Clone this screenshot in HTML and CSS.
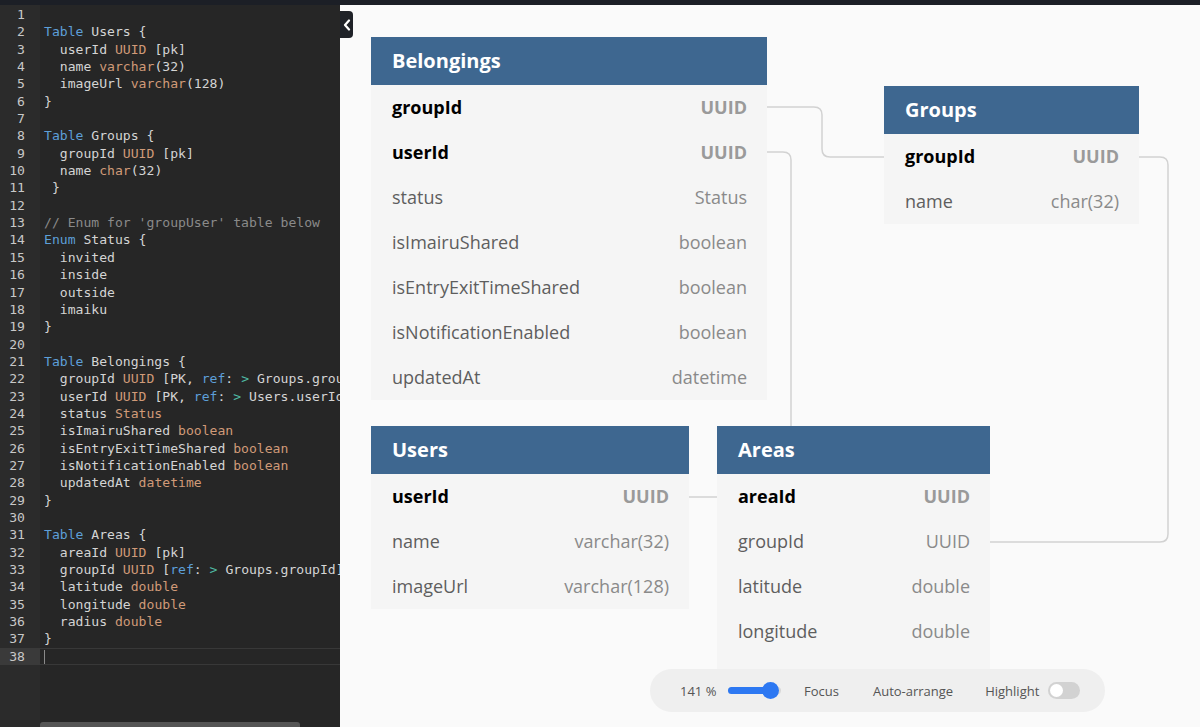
FILE: index.html
```html
<!DOCTYPE html>
<html>
<head>
<meta charset="utf-8">
<link rel="stylesheet" href="styles.css">
</head>
<body>
<div class="topbar"></div>
<div class="main">
  <div class="editor">
    <div class="gutter">
      <div>1</div><div>2</div><div>3</div><div>4</div><div>5</div><div>6</div><div>7</div><div>8</div><div>9</div><div>10</div>
      <div>11</div><div>12</div><div>13</div><div>14</div><div>15</div><div>16</div><div>17</div><div>18</div><div>19</div><div>20</div>
      <div>21</div><div>22</div><div>23</div><div>24</div><div>25</div><div>26</div><div>27</div><div>28</div><div>29</div><div>30</div>
      <div>31</div><div>32</div><div>33</div><div>34</div><div>35</div><div>36</div><div>37</div><div class="active">38</div>
    </div>
    <div class="code">
      <div class="ln"> </div>
      <div class="ln"><span class="kw">Table</span> Users {</div>
      <div class="ln">  userId <span class="ty">UUID</span> [pk]</div>
      <div class="ln">  name <span class="ty">varchar</span>(32)</div>
      <div class="ln">  imageUrl <span class="ty">varchar</span>(128)</div>
      <div class="ln">}</div>
      <div class="ln"> </div>
      <div class="ln"><span class="kw">Table</span> Groups {</div>
      <div class="ln">  groupId <span class="ty">UUID</span> [pk]</div>
      <div class="ln">  name <span class="ty">char</span>(32)</div>
      <div class="ln"> }</div>
      <div class="ln"> </div>
      <div class="ln"><span class="cm">// Enum for 'groupUser' table below</span></div>
      <div class="ln"><span class="kw">Enum</span> Status {</div>
      <div class="ln">  invited</div>
      <div class="ln">  inside</div>
      <div class="ln">  outside</div>
      <div class="ln">  imaiku</div>
      <div class="ln">}</div>
      <div class="ln"> </div>
      <div class="ln"><span class="kw">Table</span> Belongings {</div>
      <div class="ln">  groupId <span class="ty">UUID</span> [PK, <span class="kw">ref</span>: <span class="op">&gt;</span> Groups.groupId]</div>
      <div class="ln">  userId <span class="ty">UUID</span> [PK, <span class="kw">ref</span>: <span class="op">&gt;</span> Users.userId]</div>
      <div class="ln">  status <span class="ty">Status</span></div>
      <div class="ln">  isImairuShared <span class="ty">boolean</span></div>
      <div class="ln">  isEntryExitTimeShared <span class="ty">boolean</span></div>
      <div class="ln">  isNotificationEnabled <span class="ty">boolean</span></div>
      <div class="ln">  updatedAt <span class="ty">datetime</span></div>
      <div class="ln">}</div>
      <div class="ln"> </div>
      <div class="ln"><span class="kw">Table</span> Areas {</div>
      <div class="ln">  areaId <span class="ty">UUID</span> [pk]</div>
      <div class="ln">  groupId <span class="ty">UUID</span> [<span class="kw">ref</span>: <span class="op">&gt;</span> Groups.groupId]</div>
      <div class="ln">  latitude <span class="ty">double</span></div>
      <div class="ln">  longitude <span class="ty">double</span></div>
      <div class="ln">  radius <span class="ty">double</span></div>
      <div class="ln">}</div>
      <div class="ln active"> </div>
    </div>
    <div class="hscroll"></div>
  </div>

  <div class="canvas">
    <button class="collapse" aria-label="Collapse editor">
      <svg width="8" height="12" viewBox="0 0 8 12"><path d="M6 1.5 L2 6 L6 10.5" fill="none" stroke="#fff" stroke-width="2.2" stroke-linecap="round" stroke-linejoin="round"/></svg>
    </button>

    <svg class="links" width="860" height="722" viewBox="0 0 860 722">
      <path d="M427 102 H474 Q482 102 482 110 V144 Q482 152 490 152 H544"/>
      <path d="M427 147 H443 Q451 147 451 155 V484 Q451 492 443 492 H349"/>
      <path d="M799 152 H820 Q828 152 828 160 V529 Q828 537 820 537 H650"/>
    </svg>

    <div class="tbl t-belongings">
      <div class="th">Belongings</div>
      <div class="row pk"><span class="n">groupId</span><span class="t">UUID</span></div>
      <div class="row pk"><span class="n">userId</span><span class="t">UUID</span></div>
      <div class="row"><span class="n">status</span><span class="t">Status</span></div>
      <div class="row"><span class="n">isImairuShared</span><span class="t">boolean</span></div>
      <div class="row"><span class="n">isEntryExitTimeShared</span><span class="t">boolean</span></div>
      <div class="row"><span class="n">isNotificationEnabled</span><span class="t">boolean</span></div>
      <div class="row"><span class="n">updatedAt</span><span class="t">datetime</span></div>
    </div>

    <div class="tbl t-groups">
      <div class="th">Groups</div>
      <div class="row pk"><span class="n">groupId</span><span class="t">UUID</span></div>
      <div class="row"><span class="n">name</span><span class="t">char(32)</span></div>
    </div>

    <div class="tbl t-users">
      <div class="th">Users</div>
      <div class="row pk"><span class="n">userId</span><span class="t">UUID</span></div>
      <div class="row"><span class="n">name</span><span class="t">varchar(32)</span></div>
      <div class="row"><span class="n">imageUrl</span><span class="t">varchar(128)</span></div>
    </div>

    <div class="tbl t-areas">
      <div class="th">Areas</div>
      <div class="row pk"><span class="n">areaId</span><span class="t">UUID</span></div>
      <div class="row"><span class="n">groupId</span><span class="t">UUID</span></div>
      <div class="row"><span class="n">latitude</span><span class="t">double</span></div>
      <div class="row"><span class="n">longitude</span><span class="t">double</span></div>
      <div class="row"><span class="n">radius</span><span class="t">double</span></div>
    </div>

    <div class="toolbar">
      <span class="zoom">141 %</span>
      <span class="slider"><span class="fill"></span><span class="thumb"></span></span>
      <span class="tb-btn focus">Focus</span>
      <span class="tb-btn arrange">Auto-arrange</span>
      <span class="tb-btn">Highlight</span>
      <span class="toggle"><span class="knob"></span></span>
    </div>
  </div>
</div>
</body>
</html>
```

FILE: styles.css
```css
* { box-sizing: border-box; }
html, body {
  margin: 0;
  padding: 0;
  width: 1200px;
  height: 727px;
  overflow: hidden;
  background: #fafafa;
}
.topbar {
  height: 5px;
  background: #1c1f26;
}
.main {
  display: flex;
  height: 722px;
}
.editor {
  width: 340px;
  flex: none;
  display: flex;
  position: relative;
  background: #262626;
  overflow: hidden;
  padding-top: 1px;
  font-family: "DejaVu Sans Mono", "Liberation Mono", monospace;
  font-size: 13.1px;
  line-height: 17.35px;
  color: #d4d4d4;
}
.gutter {
  width: 40px;
  flex: none;
  background: #2b2b2b;
  color: #c8c8c8;
  text-align: right;
  padding-right: 15px;
  margin-top: -1px;
  padding-top: 1px;
}
.gutter div { height: 17.35px; }
.gutter .active { background: #3a3a3a; margin-right: -15px; padding-right: 15px; }
.code {
  flex: 1;
  padding-left: 4px;
  overflow: hidden;
}
.ln {
  height: 17.35px;
  white-space: pre;
}
.ln.active {
  border-top: 1px solid #383838;
  border-bottom: 1px solid #383838;
  margin-left: -4px;
  padding-left: 4px;
  position: relative;
}
.ln.active::before {
  content: "";
  position: absolute;
  left: 4px;
  top: 1px;
  width: 1px;
  height: 14px;
  background: #8a8a8a;
}
.kw { color: #5d9fd8; }
.ty { color: #d09a78; }
.cm { color: #8a8a8a; }
.op { color: #4fb9a3; }
.hscroll {
  position: absolute;
  left: 40px;
  bottom: 0;
  width: 260px;
  height: 5px;
  border-radius: 3px 3px 0 0;
  background: #555;
}

.canvas {
  flex: 1;
  position: relative;
  background: #fafafa;
  overflow: hidden;
  font-family: "Open Sans", "Noto Sans", sans-serif;
}
.collapse {
  position: absolute;
  left: 0;
  top: 6px;
  width: 13px;
  height: 27px;
  padding: 0;
  border: none;
  border-radius: 0 4px 4px 0;
  background: #1f2228;
  display: flex;
  align-items: center;
  justify-content: center;
}
.links {
  position: absolute;
  left: 0;
  top: 0;
}
.links path {
  fill: none;
  stroke: #d2d2d2;
  stroke-width: 1.5;
}
.tbl {
  position: absolute;
  background: #f5f5f5;
}
.t-belongings { left: 31px; top: 32px; width: 396px; }
.t-groups { left: 544px; top: 81px; width: 255px; }
.t-users { left: 31px; top: 421px; width: 318px; }
.t-areas { left: 377px; top: 421px; width: 273px; }
.th {
  height: 48px;
  background: #3e6790;
  color: #fff;
  font-weight: 700;
  font-size: 20px;
  display: flex;
  align-items: center;
  padding-left: 21px;
  padding-bottom: 2px;
}
.row {
  height: 45px;
  display: flex;
  align-items: center;
  justify-content: space-between;
  padding: 0 20px 2px 21px;
  font-size: 18px;
}
.row .n { color: #5e5e5e; }
.row .t { color: #8a8a8a; }
.row.pk .n { color: #000; font-weight: 700; }
.row.pk .t { color: #9a9a9a; font-weight: 700; }

.toolbar {
  position: absolute;
  left: 310px;
  top: 664px;
  width: 455px;
  height: 43px;
  border-radius: 22px;
  background: #efefef;
  display: flex;
  align-items: center;
  padding-left: 30px;
  font-size: 13px;
  color: #555;
}
.zoom { width: 48px; }
.slider {
  position: relative;
  width: 53px;
  height: 7px;
  border-radius: 4px;
  background: #d8d8d8;
  margin-right: 23px;
}
.slider .fill {
  position: absolute;
  left: 0;
  top: 0;
  width: 44px;
  height: 7px;
  border-radius: 4px;
  background: #2d78f2;
}
.slider .thumb {
  position: absolute;
  left: 34px;
  top: -5px;
  width: 17px;
  height: 17px;
  border-radius: 50%;
  background: #2d78f2;
}
.tb-btn { white-space: nowrap; }
.focus { margin-right: 34px; }
.arrange { margin-right: 32px; }
.toggle {
  margin-left: 9px;
  width: 32px;
  height: 17px;
  border-radius: 9px;
  background: #d2d2d2;
  position: relative;
}
.toggle .knob {
  position: absolute;
  left: 2px;
  top: 2px;
  width: 13px;
  height: 13px;
  border-radius: 50%;
  background: #fff;
}
```
